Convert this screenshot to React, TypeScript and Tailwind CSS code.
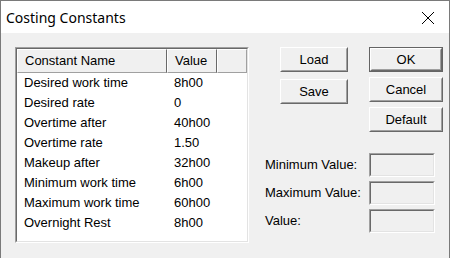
const rows: [string, string][] = [
  ["Desired work time", "8h00"],
  ["Desired rate", "0"],
  ["Overtime after", "40h00"],
  ["Overtime rate", "1.50"],
  ["Makeup after", "32h00"],
  ["Minimum work time", "6h00"],
  ["Maximum work time", "60h00"],
  ["Overnight Rest", "8h00"],
];

function Button({ label, isDefault = false }: { label: string; isDefault?: boolean }) {
  return (
    <div className={isDefault ? "border border-[#646464]" : ""}>
      <div className="border border-t-white border-l-white border-b-[#696969] border-r-[#696969]">
        <div
          className={
            "flex items-center justify-center border border-t-[#f0f0f0] border-l-[#f0f0f0] border-b-[#a0a0a0] border-r-[#a0a0a0] bg-[#f0f0f0] " +
            (isDefault ? "h-[21px]" : "h-[23px]")
          }
        >
          {label}
        </div>
      </div>
    </div>
  );
}

function Field() {
  return (
    <div className="w-[66px] border border-t-[#a0a0a0] border-l-[#a0a0a0] border-b-white border-r-white">
      <div className="h-[22px] border border-t-[#696969] border-l-[#696969] border-b-[#e3e3e3] border-r-[#e3e3e3] bg-[#f0f0f0]" />
    </div>
  );
}

export default function App() {
  return (
    <div className="w-[450px] h-[258px] overflow-hidden border-x border-t border-[#7a7a7a] bg-[#f0f0f0] text-black font-['Liberation_Sans',Arial,sans-serif] text-[13px]">
      <div className="flex h-[32px] items-center justify-between bg-white pl-[5px] pr-[14px]">
        <span className="font-['Segoe_UI','Noto_Sans',sans-serif] text-[14px] mt-[1px]">Costing Constants</span>
        <svg width="14" height="14" viewBox="0 0 14 14" className="mt-[1px]">
          <path d="M1 1 L13 13 M13 1 L1 13" stroke="#000" strokeWidth="1" fill="none" />
        </svg>
      </div>

      <div className="flex pt-[14px] pl-[14px]">
        <div className="w-[234px] h-[196px] border border-t-[#a0a0a0] border-l-[#a0a0a0] border-b-white border-r-white">
          <div className="h-full border border-t-[#696969] border-l-[#696969] border-b-[#e3e3e3] border-r-[#e3e3e3] bg-white">
            <div className="flex h-[24px] bg-[#f0f0f0]">
              <div className="flex w-[150px] items-center border border-t-white border-l-white border-b-[#a0a0a0] border-r-[#696969] pl-[7px]">
                Constant Name
              </div>
              <div className="flex w-[50px] items-center border border-t-white border-l-white border-b-[#a0a0a0] border-r-[#696969] pl-[7px]">
                Value
              </div>
              <div className="flex-1 border border-t-white border-l-white border-b-[#a0a0a0] border-r-[#a0a0a0]" />
            </div>
            {rows.map(([name, value]) => (
              <div key={name} className="flex h-[20px] items-center">
                <div className="w-[150px] pl-[7px]">{name}</div>
                <div className="pl-[7px]">{value}</div>
              </div>
            ))}
          </div>
        </div>

        <div className="flex flex-col">
          <div className="flex">
            <div className="ml-[31px] flex w-[68px] flex-col gap-[7px]">
              <Button label="Load" />
              <Button label="Save" />
            </div>
            <div className="ml-[21px] flex w-[74px] flex-col gap-[5px]">
              <Button label="OK" isDefault />
              <Button label="Cancel" />
              <Button label="Default" />
            </div>
          </div>

          <div className="ml-[16px] mt-[21px] grid grid-cols-[104px_66px] gap-y-[4px] items-center">
            <span>Minimum Value:</span>
            <Field />
            <span>Maximum Value:</span>
            <Field />
            <span>Value:</span>
            <Field />
          </div>
        </div>
      </div>
    </div>
  );
}
